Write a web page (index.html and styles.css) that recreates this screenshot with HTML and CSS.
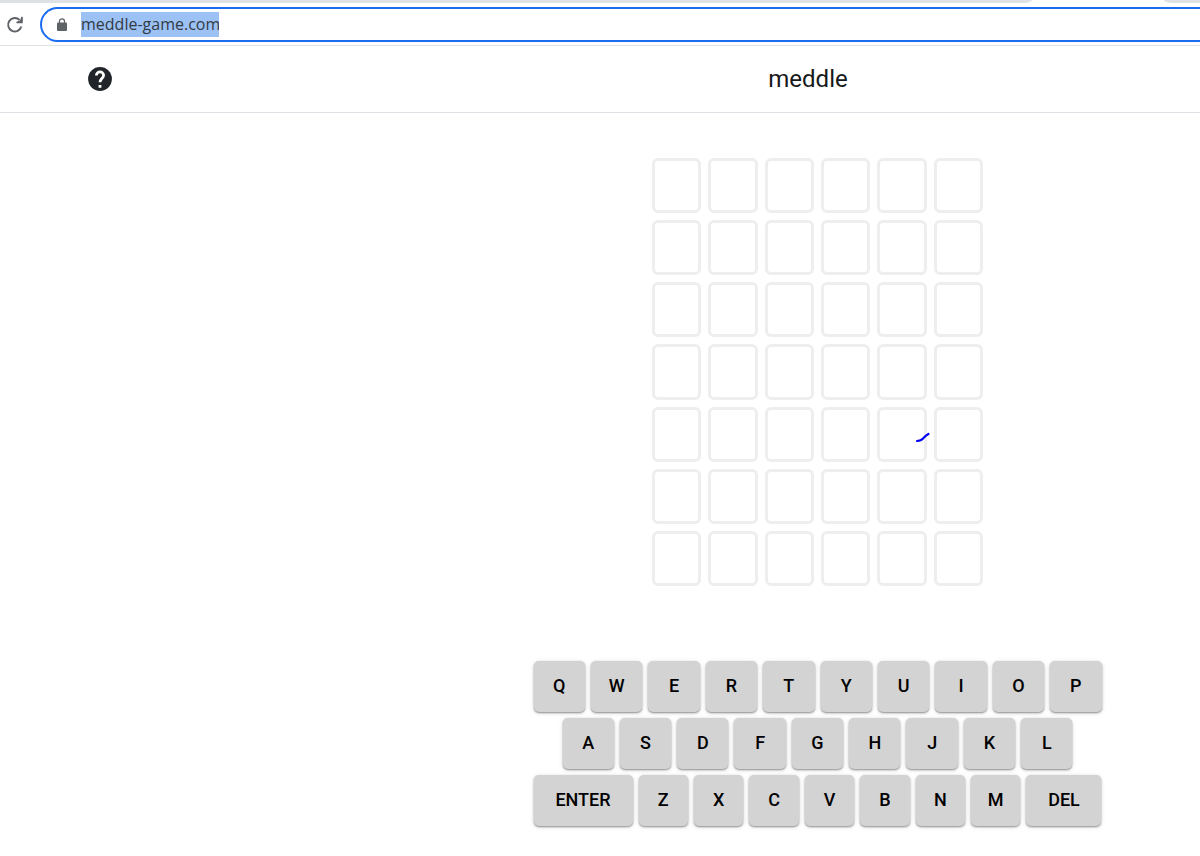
FILE: index.html
```html
<!DOCTYPE html>
<html lang="en">
<head>
<meta charset="utf-8">
<title>meddle</title>
<link rel="stylesheet" href="styles.css">
</head>
<body>
<div class="browser">
  <div class="tabstrip"><span class="tabs-left"></span><span class="tabs-right"></span></div>
  <div class="toolbar">
    <button class="reload" type="button" aria-label="Reload">
      <svg width="18" height="18" viewBox="0 0 18 18"><path d="M15.300 10.500A6.700 6.700 0 1 1 13.600 4" fill="none" stroke="#5f6368" stroke-width="1.9"/><path d="M16.800 .8V7.200H10.400V5.800L14 4.600 15.400 .8z" fill="#5f6368"/></svg>
    </button>
    <div class="omnibox">
      <svg class="lock" width="10" height="14" viewBox="0 0 10 14"><path d="M2.500 5V3.300a2.500 2.500 0 0 1 5 0V5" fill="none" stroke="#5f6368" stroke-width="1.3"/><rect y="4.500" width="10" height="8.500" rx="1" fill="#5f6368"/></svg>
      <input class="url" type="text" aria-label="Address" value="meddle-game.com">
    </div>
  </div>
</div>
<header class="header">
  <button class="help" type="button" aria-label="Help">
    <svg width="24" height="24" viewBox="2 2 20 20"><circle cx="12" cy="12" r="9.900" fill="#212529"/><path d="M9 9c0-1.650 1.350-3 3-3s3 1.350 3 3c0 2.200-3 2.600-3 5.800M12 17v2.200" fill="none" stroke="#fff" stroke-width="2.300"/></svg>
  </button>
  <h1 class="title">meddle</h1>
</header>
<main class="game">
  <div class="board">
    <div class="cell"></div><div class="cell"></div><div class="cell"></div><div class="cell"></div><div class="cell"></div><div class="cell"></div>
    <div class="cell"></div><div class="cell"></div><div class="cell"></div><div class="cell"></div><div class="cell"></div><div class="cell"></div>
    <div class="cell"></div><div class="cell"></div><div class="cell"></div><div class="cell"></div><div class="cell"></div><div class="cell"></div>
    <div class="cell"></div><div class="cell"></div><div class="cell"></div><div class="cell"></div><div class="cell"></div><div class="cell"></div>
    <div class="cell"></div><div class="cell"></div><div class="cell"></div><div class="cell"></div>
    <div class="cell"><svg class="mark" width="16" height="12" viewBox="0 0 16 12"><path d="M2 9C7 9 7.500 7 9.500 5S12 3 13.500 2" fill="none" stroke="#0000f5" stroke-width="2.200" stroke-linecap="round"/></svg></div>
    <div class="cell"></div>
    <div class="cell"></div><div class="cell"></div><div class="cell"></div><div class="cell"></div><div class="cell"></div><div class="cell"></div>
    <div class="cell"></div><div class="cell"></div><div class="cell"></div><div class="cell"></div><div class="cell"></div><div class="cell"></div>
  </div>
  <div class="keyboard">
    <div class="row">
      <button class="key">Q</button><button class="key">W</button><button class="key">E</button><button class="key">R</button><button class="key">T</button><button class="key">Y</button><button class="key">U</button><button class="key">I</button><button class="key">O</button><button class="key">P</button>
    </div>
    <div class="row row-middle">
      <button class="key">A</button><button class="key">S</button><button class="key">D</button><button class="key">F</button><button class="key">G</button><button class="key">H</button><button class="key">J</button><button class="key">K</button><button class="key">L</button>
    </div>
    <div class="row">
      <button class="key key-enter">ENTER</button><button class="key">Z</button><button class="key">X</button><button class="key">C</button><button class="key">V</button><button class="key">B</button><button class="key">N</button><button class="key">M</button><button class="key key-del">DEL</button>
    </div>
  </div>
</main>
</body>
</html>
```

FILE: styles.css
```css
* { box-sizing: border-box; }

body {
  margin: 0;
  background: #fff;
  color: #16181b;
  font-family: Roboto, sans-serif;
  overflow-x: hidden;
}

button {
  border: 0;
  padding: 0;
  background: none;
  font: inherit;
  color: inherit;
}

svg { display: block; }

.browser { border-bottom: 1px solid #dee1e6; }

.tabstrip {
  display: flex;
  justify-content: space-between;
  height: 3px;
}

.tabs-left {
  width: 86%;
  background: #dee1e6;
  border-bottom-right-radius: 8px 3px;
}

.tabs-right {
  width: 3%;
  background: #dee1e6;
  border-bottom-left-radius: 8px 3px;
}

.toolbar {
  display: flex;
  align-items: center;
  gap: 16px;
  padding: 4px 0 3px 6px;
}

.omnibox {
  flex: 1;
  display: flex;
  align-items: center;
  gap: 14px;
  height: 35px;
  padding-left: 15px;
  border: 2px solid #1a6df0;
  border-right: 0;
  border-radius: 18px 0 0 18px;
}

.url {
  width: 138px;
  field-sizing: content;
  height: 25px;
  border: 0;
  padding: 0;
  background: #9cc2f5;
  color: #333a44;
  font: 16px/25px "Open Sans", sans-serif;
}

.header {
  display: flex;
  align-items: center;
  height: 67px;
  padding-left: 88px;
  border-bottom: 1px solid #dee2e6;
}

.title {
  flex: 1;
  margin: 0;
  padding-left: 304px;
  text-align: center;
  font-size: 24px;
  line-height: 32px;
  font-weight: 400;
}

.game {
  display: flex;
  flex-direction: column;
  align-items: center;
  gap: 75px;
  padding: 45px 0 30px 435px;
}

.board {
  display: grid;
  grid-template-columns: repeat(6, 1fr);
  grid-template-rows: repeat(7, 1fr);
  gap: 7px;
  width: 331px;
  height: 428px;
}

.cell {
  position: relative;
  border: 3px solid #eee;
  border-radius: 6px;
}

.mark {
  position: absolute;
  right: -7px;
  top: 22px;
}

.keyboard {
  display: flex;
  flex-direction: column;
  gap: 6px;
  width: 568px;
}

.row {
  display: flex;
  gap: 6px;
}

.row-middle { padding: 0 29px; }

.key {
  flex: 1;
  min-width: 0;
  height: 51px;
  padding-bottom: 2px;
  border-radius: 5px;
  background: #d3d3d3;
  color: #000;
  font-size: 18px;
  font-weight: 500;
  box-shadow: 0 1px 2px rgba(0, 0, 0, 0.4), 0 1px 5px rgba(0, 0, 0, 0.12);
}

.key-enter { flex: 0 0 99px; }

.key-del { flex: 0 0 75px; }
```
